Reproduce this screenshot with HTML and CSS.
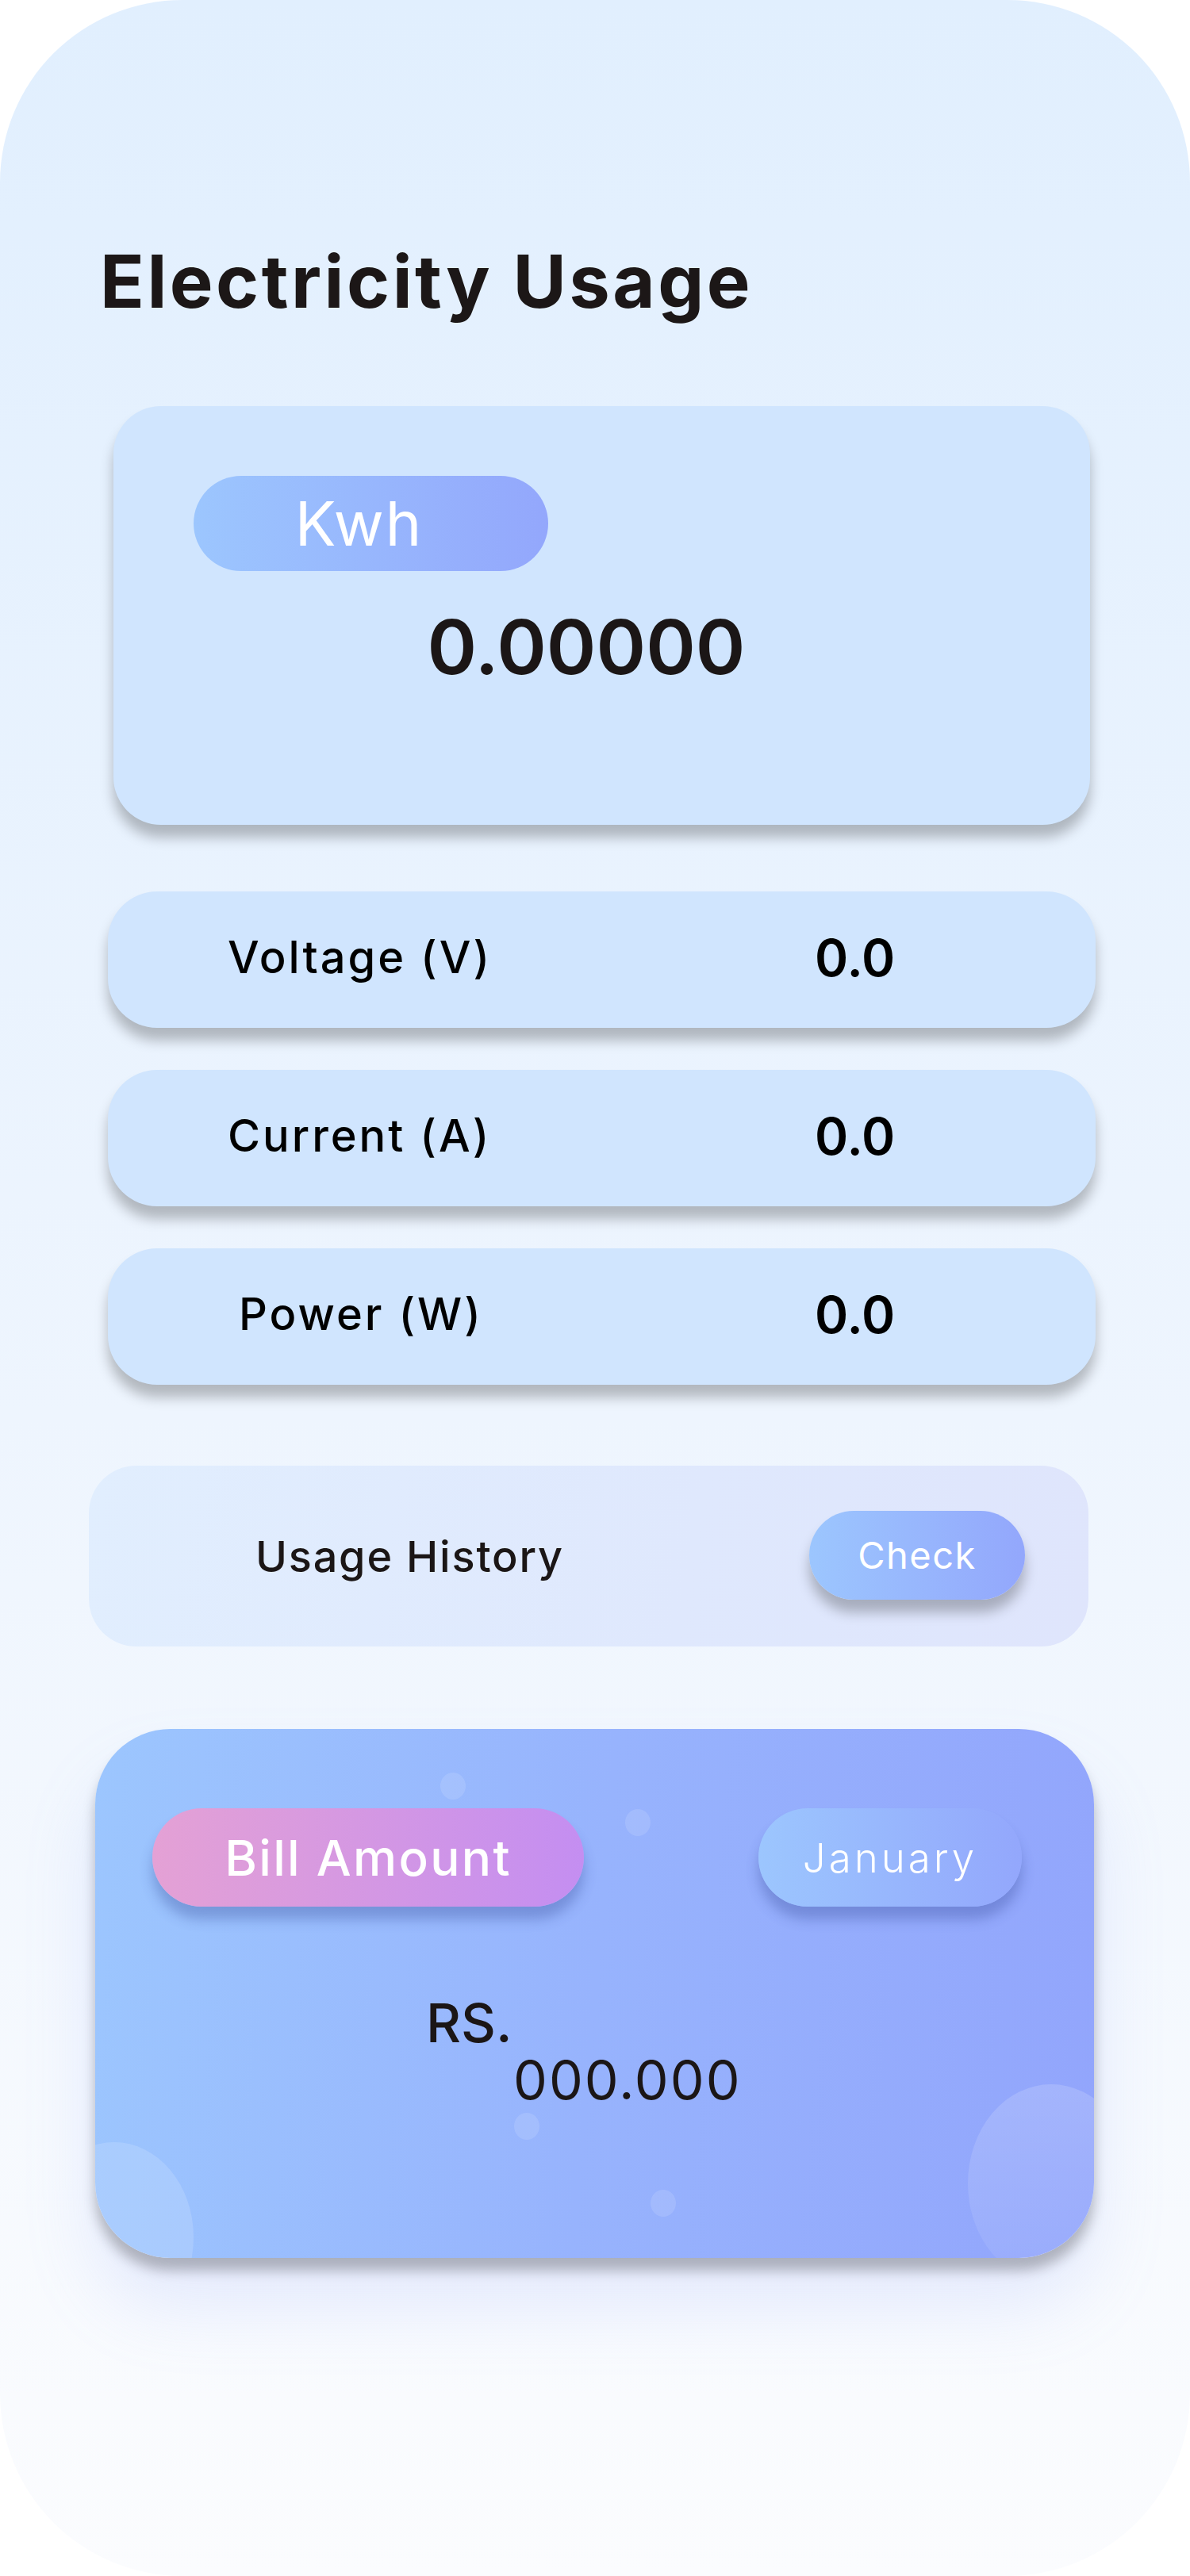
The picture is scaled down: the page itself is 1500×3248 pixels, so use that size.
FILE: index.html
```html
<!DOCTYPE html>
<html lang="en">
<head>
<meta charset="utf-8">
<title>Electricity Usage</title>
<link rel="stylesheet" href="styles.css">
</head>
<body>
<div class="screen">
  <h1 class="title">Electricity Usage</h1>

  <section class="kwh-card">
    <div class="pill pill-blue kwh-pill">Kwh</div>
    <div class="kwh-value">0.00000</div>
  </section>

  <div class="reading-list">
    <div class="reading">
      <span class="reading-label">Voltage (V)</span>
      <span class="reading-value">0.0</span>
    </div>
    <div class="reading">
      <span class="reading-label">Current (A)</span>
      <span class="reading-value">0.0</span>
    </div>
    <div class="reading reading-indent">
      <span class="reading-label">Power (W)</span>
      <span class="reading-value">0.0</span>
    </div>
  </div>

  <section class="history">
    <span class="history-label">Usage History</span>
    <button class="pill pill-blue check-btn">Check</button>
  </section>

  <section class="bill-card">
    <span class="bubble bubble-a"></span>
    <span class="bubble bubble-b"></span>
    <span class="bubble bubble-c"></span>
    <span class="bubble bubble-d"></span>
    <span class="blob blob-left"></span>
    <span class="blob blob-right"></span>
    <div class="bill-head">
      <div class="pill pill-pink bill-pill">Bill Amount</div>
      <div class="pill pill-blue month-pill">January</div>
    </div>
    <div class="bill-amount">
      <div class="rs">RS.</div>
      <div class="amount">000.000</div>
    </div>
  </section>
</div>
</body>
</html>
```

FILE: styles.css
```css
* { box-sizing: border-box; }

html, body {
  margin: 0;
  padding: 0;
  background: #ffffff;
}

body {
  font-family: Inter, "Open Sans", "Liberation Sans", sans-serif;
  color: #1b1616;
}

.screen {
  width: 1500px;
  height: 3248px;
  border-radius: 230px;
  background: linear-gradient(180deg, #e1effe 0%, #eef5fe 55%, #fbfcfe 100%);
  padding-top: 309px;
  display: flex;
  flex-direction: column;
  overflow: hidden;
}

.title {
  margin: 0 0 0 126px;
  font-size: 92px;
  line-height: 92px;
  font-weight: 700;
  letter-spacing: 3.5px;
  color: #1c1717;
}

/* pills */
.pill {
  display: flex;
  align-items: center;
  justify-content: center;
  border-radius: 999px;
  color: #ffffff;
  border: 0;
  padding: 0;
  font-family: inherit;
}

.pill-blue {
  background: linear-gradient(90deg, #9cc6fe 0%, #93a7fc 100%);
}

.pill-pink {
  background: linear-gradient(90deg, #e4a1d5 0%, #c48ef1 100%);
}

/* kwh card */
.kwh-card {
  margin: 111px 0 0 143px;
  width: 1231px;
  height: 528px;
  border-radius: 60px;
  background: #d0e5fe;
  box-shadow: 0 16px 16px rgba(0, 0, 0, 0.25);
  padding: 88px 40px 0 101px;
}

.kwh-pill {
  width: 447px;
  height: 120px;
  font-size: 77px;
  font-weight: 400;
  letter-spacing: 2px;
  padding-right: 30px;
}

.kwh-value {
  margin: 48px 0 0 -100px;
  text-align: center;
  font-size: 95px;
  line-height: 96px;
  font-weight: 600;
  color: #1b1616;
}

/* readings */
.reading-list {
  margin: 84px 0 0 136px;
  display: flex;
  flex-direction: column;
  gap: 53px;
}

.reading {
  width: 1245px;
  height: 172px;
  border-radius: 62px;
  background: #d0e5fe;
  box-shadow: 0 16px 16px rgba(0, 0, 0, 0.25);
  display: grid;
  grid-template-columns: 740px 1fr;
  align-items: center;
  padding-left: 151px;
  padding-bottom: 6px;
}

.reading-indent {
  grid-template-columns: 726px 1fr;
  padding-left: 165px;
}

.reading-label {
  font-size: 56px;
  font-weight: 500;
  letter-spacing: 3px;
  color: #000000;
}

.reading-value {
  font-size: 64px;
  font-weight: 600;
  color: #000000;
}

/* usage history */
.history {
  margin: 102px 0 0 112px;
  width: 1260px;
  height: 228px;
  border-radius: 60px;
  background: linear-gradient(100deg, #e1eefe 0%, #dfe8fd 60%, #dfe5fc 100%);
  display: flex;
  align-items: center;
  padding-left: 210px;
}

.history-label {
  font-size: 54px;
  font-weight: 500;
  letter-spacing: 1.8px;
  color: #1b1616;
  width: 698px;
}

.check-btn {
  width: 272px;
  height: 112px;
  font-size: 47px;
  font-weight: 400;
  letter-spacing: 1.5px;
  box-shadow: 0 16px 16px rgba(0, 0, 0, 0.25);
  margin-bottom: 3px;
}

/* bill card */
.bill-card {
  position: relative;
  overflow: hidden;
  margin: 104px 0 0 120px;
  width: 1259px;
  height: 667px;
  border-radius: 95px;
  background: linear-gradient(95deg, #9cc6fe 0%, #97b3fd 50%, #92a5fc 100%);
  box-shadow: 0 16px 16px rgba(0, 0, 0, 0.25), 0 60px 90px rgba(140, 160, 250, 0.18);
  padding: 100px 91px 0 72px;
}

.bubble, .blob {
  position: absolute;
  border-radius: 50%;
  background: rgba(255, 255, 255, 0.12);
}

.bubble { width: 32px; height: 34px; }
.bubble-a { left: 435px; top: 55px; }
.bubble-b { left: 668px; top: 101px; }
.bubble-c { left: 528px; top: 484px; }
.bubble-d { left: 700px; top: 581px; }

.blob-left {
  width: 200px;
  height: 240px;
  left: -76px;
  top: 521px;
  background: rgba(255, 255, 255, 0.15);
}

.blob-right {
  width: 210px;
  height: 250px;
  left: 1100px;
  top: 448px;
  background: linear-gradient(180deg, rgba(255, 255, 255, 0.16), rgba(255, 255, 255, 0.06));
}

.bill-head {
  position: relative;
  display: flex;
  justify-content: space-between;
  align-items: center;
}

.bill-pill {
  width: 544px;
  height: 124px;
  font-size: 62px;
  font-weight: 500;
  letter-spacing: 2.3px;
  box-shadow: 0 16px 16px rgba(40, 60, 140, 0.3);
}

.month-pill {
  width: 332px;
  height: 124px;
  font-size: 51px;
  font-weight: 300;
  letter-spacing: 4px;
  box-shadow: 0 16px 16px rgba(40, 60, 140, 0.3);
}

.bill-amount {
  position: relative;
  margin-top: 110px;
  font-size: 68px;
  line-height: 72px;
  font-weight: 400;
  color: #1b1616;
}

.rs {
  margin-left: 345px;
  font-weight: 500;
}

.amount {
  margin-left: 455px;
  letter-spacing: 2px;
}
```
